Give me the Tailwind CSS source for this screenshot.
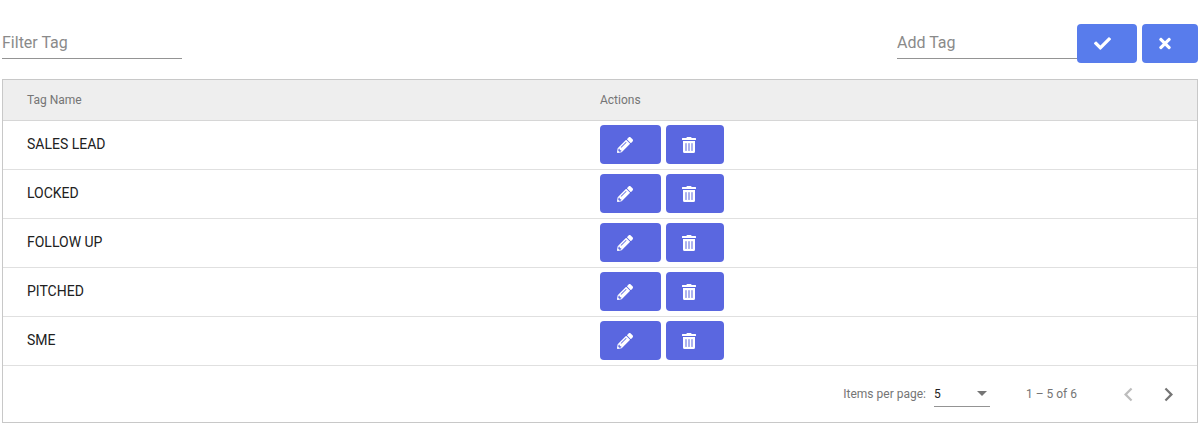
<!DOCTYPE html>
<html lang="en">
<head>
    <meta charset="UTF-8">
    <title>Tags</title>
    <script src="https://cdn.jsdelivr.net/npm/@tailwindcss/browser@4"></script>
</head>
<body class="bg-white font-['Roboto',sans-serif] h-[433px] overflow-hidden">
    <svg class="hidden">
        <symbol id="pencil" viewBox="0 0 512 512"><path d="M497.9 142.1l-46.1 46.1c-4.7 4.7-12.3 4.7-17 0l-111-111c-4.7-4.7-4.7-12.3 0-17l46.1-46.1c18.7-18.7 49.1-18.7 67.9 0l60.1 60.1c18.8 18.7 18.8 49.1 0 67.9zM284.2 99.8L21.6 362.4.4 483.9c-2.9 16.4 11.4 30.6 27.8 27.8l121.5-21.3 262.6-262.6c4.7-4.7 4.7-12.3 0-17l-111-111c-4.8-4.7-12.4-4.7-17.1 0zM124.1 339.9c-5.5-5.5-5.5-14.3 0-19.8l154-154c5.5-5.5 14.3-5.5 19.8 0s5.5 14.3 0 19.8l-154 154c-5.5 5.5-14.3 5.5-19.8 0zM88 424h48v36.3l-64.5 11.3-31.1-31.1L51.7 376H88v48z"/></symbol>
        <symbol id="trash" viewBox="0 0 448 512"><path d="M32 464a48 48 0 0 0 48 48h288a48 48 0 0 0 48-48V128H32zm272-256a16 16 0 0 1 32 0v224a16 16 0 0 1-32 0zm-96 0a16 16 0 0 1 32 0v224a16 16 0 0 1-32 0zm-96 0a16 16 0 0 1 32 0v224a16 16 0 0 1-32 0zM432 32H312l-9.4-18.7A24 24 0 0 0 281.1 0H166.8a23.72 23.72 0 0 0-21.4 13.3L136 32H16A16 16 0 0 0 0 48v32a16 16 0 0 0 16 16h416a16 16 0 0 0 16-16V48a16 16 0 0 0-16-16z"/></symbol>
    </svg>

    <main class="pl-[2px] pr-[4px] pt-[24px]">
        <div class="flex justify-between items-start h-[55px]">
            <div class="w-[180px] h-[35px] border-b border-[#949494]">
                <input type="text" placeholder="Filter Tag" class="w-full h-[34px] pt-[2px] text-[16px] outline-none placeholder:text-[#8a8a8a]">
            </div>
            <div class="flex items-start">
                <div class="w-[180px] h-[35px] border-b border-[#949494]">
                    <input type="text" placeholder="Add Tag" class="w-full h-[34px] pt-[2px] text-[16px] outline-none placeholder:text-[#8a8a8a]">
                </div>
                <button class="w-[60px] h-[39px] rounded-[4px] bg-[#587cec] flex items-center pl-[17px]">
                    <svg class="w-[17px] h-[17px]" viewBox="0 0 512 512" fill="#fff"><path d="M173.898 439.404l-166.4-166.4c-9.997-9.997-9.997-26.206 0-36.204l36.203-36.204c9.997-9.998 26.207-9.998 36.204 0L192 312.69 432.095 72.596c9.997-9.997 26.207-9.997 36.204 0l36.203 36.204c9.997 9.997 9.997 26.206 0 36.204l-294.4 294.401c-9.998 9.997-26.207 9.997-36.204-.001z"/></svg>
                </button>
                <button class="ml-[5px] w-[56px] h-[39px] rounded-[4px] bg-[#587cec] flex items-center pl-[17px]">
                    <svg class="w-[12px] h-[17px]" viewBox="0 0 352 512" fill="#fff"><path d="M242.72 256l100.07-100.07c12.28-12.28 12.28-32.19 0-44.48l-22.24-22.24c-12.28-12.28-32.19-12.28-44.48 0L176 189.28 75.93 89.21c-12.28-12.28-32.19-12.28-44.48 0L9.21 111.45c-12.28 12.28-12.28 32.19 0 44.48L109.28 256 9.21 356.07c-12.28 12.28-12.28 32.19 0 44.48l22.24 22.24c12.28 12.28 32.2 12.28 44.48 0L176 322.72l100.07 100.07c12.28 12.28 32.2 12.28 44.48 0l22.24-22.24c12.28-12.28 12.28-32.19 0-44.48L242.72 256z"/></svg>
                </button>
            </div>
        </div>

        <div class="border border-[#c8c8c8] h-[344px]">
            <div class="flex items-center h-[41px] bg-[#eeeeee] border-b border-[#d6d6d6] text-[12px] font-normal text-[#757575]">
                <div class="pl-[24px] w-[597px]">Tag Name</div>
                <div>Actions</div>
            </div>

            <div class="flex items-start h-[49px] border-b border-[#e0e0e0] text-[14px] text-[#212121]">
                <div class="pl-[24px] w-[597px] leading-[46px]">SALES LEAD</div>
                <div class="flex gap-[5px] pt-[4px]">
                    <button class="w-[61px] h-[39px] rounded-[4px] bg-[#5a67e0] flex items-center pl-[17px]"><svg class="w-[16px] h-[16px] fill-white"><use href="#pencil"/></svg></button>
                    <button class="w-[58px] h-[39px] rounded-[4px] bg-[#5a67e0] flex items-center pl-[16px]"><svg class="w-[14px] h-[16px] fill-white"><use href="#trash"/></svg></button>
                </div>
            </div>
            <div class="flex items-start h-[49px] border-b border-[#e0e0e0] text-[14px] text-[#212121]">
                <div class="pl-[24px] w-[597px] leading-[46px]">LOCKED</div>
                <div class="flex gap-[5px] pt-[4px]">
                    <button class="w-[61px] h-[39px] rounded-[4px] bg-[#5a67e0] flex items-center pl-[17px]"><svg class="w-[16px] h-[16px] fill-white"><use href="#pencil"/></svg></button>
                    <button class="w-[58px] h-[39px] rounded-[4px] bg-[#5a67e0] flex items-center pl-[16px]"><svg class="w-[14px] h-[16px] fill-white"><use href="#trash"/></svg></button>
                </div>
            </div>
            <div class="flex items-start h-[49px] border-b border-[#e0e0e0] text-[14px] text-[#212121]">
                <div class="pl-[24px] w-[597px] leading-[46px]">FOLLOW UP</div>
                <div class="flex gap-[5px] pt-[4px]">
                    <button class="w-[61px] h-[39px] rounded-[4px] bg-[#5a67e0] flex items-center pl-[17px]"><svg class="w-[16px] h-[16px] fill-white"><use href="#pencil"/></svg></button>
                    <button class="w-[58px] h-[39px] rounded-[4px] bg-[#5a67e0] flex items-center pl-[16px]"><svg class="w-[14px] h-[16px] fill-white"><use href="#trash"/></svg></button>
                </div>
            </div>
            <div class="flex items-start h-[49px] border-b border-[#e0e0e0] text-[14px] text-[#212121]">
                <div class="pl-[24px] w-[597px] leading-[46px]">PITCHED</div>
                <div class="flex gap-[5px] pt-[4px]">
                    <button class="w-[61px] h-[39px] rounded-[4px] bg-[#5a67e0] flex items-center pl-[17px]"><svg class="w-[16px] h-[16px] fill-white"><use href="#pencil"/></svg></button>
                    <button class="w-[58px] h-[39px] rounded-[4px] bg-[#5a67e0] flex items-center pl-[16px]"><svg class="w-[14px] h-[16px] fill-white"><use href="#trash"/></svg></button>
                </div>
            </div>
            <div class="flex items-start h-[49px] border-b border-[#e0e0e0] text-[14px] text-[#212121]">
                <div class="pl-[24px] w-[597px] leading-[46px]">SME</div>
                <div class="flex gap-[5px] pt-[4px]">
                    <button class="w-[61px] h-[39px] rounded-[4px] bg-[#5a67e0] flex items-center pl-[17px]"><svg class="w-[16px] h-[16px] fill-white"><use href="#pencil"/></svg></button>
                    <button class="w-[58px] h-[39px] rounded-[4px] bg-[#5a67e0] flex items-center pl-[16px]"><svg class="w-[14px] h-[16px] fill-white"><use href="#trash"/></svg></button>
                </div>
            </div>

            <div class="flex items-center justify-end h-[56px] text-[12px] text-[#757575]">
                <span class="mr-[8px]">Items per page:</span>
                <div class="w-[56px] h-[25px] border-b border-[#949494] flex items-center justify-between">
                    <span class="text-[#212121]">5</span>
                    <span class="w-0 h-0 mr-[3px] border-x-[5px] border-x-transparent border-t-[5px] border-t-[#757575]"></span>
                </div>
                <span class="ml-[36px]">1 – 5 of 6</span>
                <div class="ml-[38px] mr-[15px] flex items-center gap-[13px]">
                    <svg class="w-[27px] h-[27px]" viewBox="0 0 24 24" fill="#bdbdbd"><path d="M15.41 7.41 14 6l-6 6 6 6 1.41-1.41L10.83 12z"/></svg>
                    <svg class="w-[27px] h-[27px]" viewBox="0 0 24 24" fill="#757575"><path d="M10 6 8.59 7.41 13.17 12l-4.58 4.59L10 18l6-6z"/></svg>
                </div>
            </div>
        </div>
    </main>
</body>
</html>
